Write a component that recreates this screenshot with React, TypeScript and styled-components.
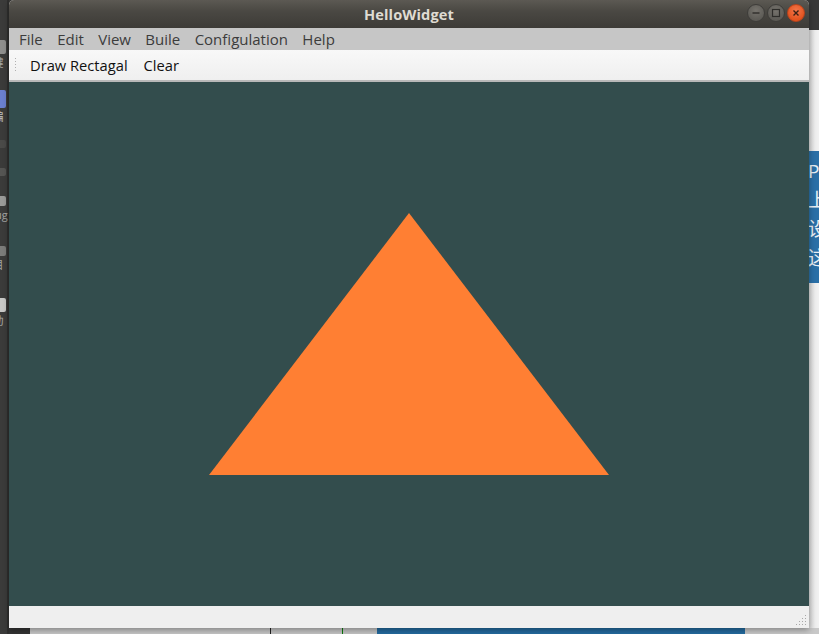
import React from "react";
import styled, { createGlobalStyle } from "styled-components";

const Global = createGlobalStyle`
  html, body { margin: 0; padding: 0; }
  body { width: 819px; height: 634px; overflow: hidden; background: #3a3a38; }
`;

const UI = `"Open Sans", "DejaVu Sans", "Noto Sans CJK SC", sans-serif`;

const Desktop = styled.div`
  position: relative;
  width: 819px;
  height: 634px;
  overflow: hidden;
  background: #3a3a38;
  font-family: ${UI};
`;

/* left launcher of the desktop, mostly hidden behind the window */
const Dock = styled.div`
  position: absolute;
  left: 0;
  top: 0;
  width: 9px;
  height: 634px;
  box-sizing: border-box;
  padding-top: 40px;
  display: flex;
  flex-direction: column;
  align-items: flex-end;
  gap: 2px;
  background: linear-gradient(to right, #3b3b3a 0 7px, #2f2f2e 7px);
  overflow: hidden;
`;

const DockItem = styled.div<{ $h: number }>`
  height: ${(p) => p.$h}px;
  width: 20px;
  flex: none;
  display: flex;
  flex-direction: column;
  align-items: center;
  gap: 3px;
  margin-right: 1px;
`;

const DockIcon = styled.div<{ $color: string; $h: number }>`
  width: 16px;
  height: ${(p) => p.$h}px;
  border-radius: 2px;
  background: ${(p) => p.$color};
`;

const DockLabel = styled.span<{ $color?: string }>`
  font-size: 11px;
  line-height: 12px;
  color: ${(p) => p.$color ?? "#a6a6a4"};
  white-space: nowrap;
`;

const RightBack = styled.div`
  position: absolute;
  left: 809px;
  top: 0;
  width: 10px;
  height: 634px;
  display: flex;
  flex-direction: column;
  background: linear-gradient(to right, #d6d6d6, #ececec 6px, #f2f2f2);
  overflow: hidden;
`;

const RightTop = styled.div`
  height: 30px;
  flex: none;
  margin-bottom: 121px;
  background: #383838;
`;

const BluePanel = styled.div`
  width: 10px;
  height: 132px;
  flex: none;
  background: #2a6fa6;
  color: #e8eef4;
  font-size: 19px;
  line-height: 29px;
  padding-top: 6px;
  box-sizing: border-box;
`;

const BlueLine = styled.div`
  margin-left: -1px;
  white-space: nowrap;
`;

const BottomBack = styled.div`
  position: absolute;
  left: 9px;
  top: 628px;
  width: 810px;
  height: 6px;
  display: flex;
  background: #c4c4c4;
`;

const BottomSeg = styled.div<{ $w: number; $bg: string; $edge?: string }>`
  width: ${(p) => p.$w}px;
  flex: none;
  background: ${(p) => p.$bg};
  border-left: ${(p) => (p.$edge ? `1px solid ${p.$edge}` : "none")};
  box-sizing: border-box;
`;

/* the application window */
const Window = styled.div`
  position: absolute;
  left: 9px;
  top: 0;
  width: 800px;
  height: 628px;
  display: flex;
  flex-direction: column;
  background: #efefef;
  border-radius: 5px 5px 0 0;
  overflow: hidden;
  box-shadow: 0 2px 6px rgba(0, 0, 0, 0.35);
`;

const TitleBar = styled.div`
  position: relative;
  height: 28px;
  flex: none;
  display: flex;
  align-items: center;
  justify-content: center;
  background: linear-gradient(to bottom, #5c5953 0, #4a4843 40%, #3d3b37 100%);
`;

const Title = styled.div`
  font-family: ${UI};
  font-weight: 700;
  font-size: 14.6px;
  color: #dfdbd2;
  letter-spacing: 0.1px;
`;

const Controls = styled.div`
  position: absolute;
  right: 4px;
  top: 4px;
  display: flex;
  gap: 2px;
`;

const CtlButton = styled.div<{ $close?: boolean }>`
  width: 18px;
  height: 18px;
  border-radius: 50%;
  display: flex;
  align-items: center;
  justify-content: center;
  box-sizing: border-box;
  border: 1px solid ${(p) => (p.$close ? "#b9431c" : "#3e3d3a")};
  background: ${(p) =>
    p.$close
      ? "radial-gradient(circle at 50% 35%, #f3764a, #e2531f 70%)"
      : "radial-gradient(circle at 50% 35%, #76736d, #5d5b56 70%)"};
`;

const MenuBar = styled.div`
  height: 22px;
  flex: none;
  display: flex;
  align-items: center;
  gap: 14.4px;
  padding-left: 10px;
  background: #c6c6c6;
`;

const MenuItem = styled.span`
  font-family: ${UI};
  font-size: 15px;
  color: #3c3c3c;
  line-height: 22px;
  margin-top: -1px;
`;

const ToolBar = styled.div`
  height: 30px;
  flex: none;
  display: flex;
  align-items: center;
  gap: 16px;
  padding-left: 5px;
  background: linear-gradient(to bottom, #f8f8f8, #efefef);
  border-bottom: 2px solid #b9b9b9;
`;

const Handle = styled.div`
  width: 3px;
  height: 16px;
  margin-right: -3px;
  background-image: radial-gradient(circle, #b0b0b0 0.7px, transparent 0.8px);
  background-size: 3px 3px;
`;

const ToolButton = styled.span`
  font-family: ${UI};
  font-size: 14.7px;
  color: #111;
`;

const GLView = styled.div`
  flex: none;
  height: 524px;
  background: #334d4d;
`;

const Canvas = styled.svg`
  display: block;
  width: 800px;
  height: 524px;
`;

const StatusBar = styled.div`
  flex: 1;
  display: flex;
  justify-content: flex-end;
  align-items: flex-end;
  padding: 0 2px 2px 0;
  background: #efefef;
`;

const menus = ["File", "Edit", "View", "Buile", "Configulation", "Help"];

const dock: { icon: string; ih: number; label?: string; lc?: string; h: number }[] = [
  { icon: "#8f8f8d", ih: 14, label: "鍵", h: 48 },
  { icon: "#6b7fd0", ih: 18, label: "编", lc: "#c0c0c0", h: 48 },
  { icon: "#4a4a48", ih: 8, h: 26 },
  { icon: "#555553", ih: 8, h: 26 },
  { icon: "#9a9a98", ih: 10, label: "bug", h: 48 },
  { icon: "#7c7c7a", ih: 10, label: "目", h: 50 },
  { icon: "#c8c8c6", ih: 14, label: "动", h: 48 },
];

const gripDots = [
  [10, 1],
  [7, 4],
  [10, 4],
  [4, 7],
  [7, 7],
  [10, 7],
  [1, 10],
  [4, 10],
  [7, 10],
  [10, 10],
];

export default function App() {
  const w = 800;
  const h = 524;
  const pt = (x: number, y: number) =>
    `${(w / 2) * (1 + x)},${(h / 2) * (1 - y)}`;
  return (
    <>
      <Global />
      <Desktop>
        <Dock>
          {dock.map((d, i) => (
            <DockItem key={i} $h={d.h}>
              <DockIcon $color={d.icon} $h={d.ih} />
              {d.label && <DockLabel $color={d.lc}>{d.label}</DockLabel>}
            </DockItem>
          ))}
        </Dock>

        <RightBack>
          <RightTop />
          <BluePanel>
            <BlueLine>Pi</BlueLine>
            <BlueLine>上</BlueLine>
            <BlueLine>设</BlueLine>
            <BlueLine>这</BlueLine>
          </BluePanel>
        </RightBack>

        <BottomBack>
          <BottomSeg $w={21} $bg="#333" />
          <BottomSeg $w={240} $bg="#c6c6c6" />
          <BottomSeg $w={72} $bg="#c4c4c4" $edge="#222" />
          <BottomSeg $w={35} $bg="#c4c4c4" $edge="#0a7a0a" />
          <BottomSeg $w={368} $bg="#236a9e" />
          <BottomSeg $w={74} $bg="#c8c8c8" />
        </BottomBack>

        <Window>
          <TitleBar>
            <Title>HelloWidget</Title>
            <Controls>
              <CtlButton>
                <svg width="10" height="10" viewBox="0 0 10 10">
                  <line x1="1.5" y1="5" x2="8.5" y2="5" stroke="#2e2d2a" strokeWidth="1.4" />
                </svg>
              </CtlButton>
              <CtlButton>
                <svg width="10" height="10" viewBox="0 0 10 10">
                  <rect x="1.5" y="1.5" width="7" height="7" fill="none" stroke="#2e2d2a" strokeWidth="1.2" />
                </svg>
              </CtlButton>
              <CtlButton $close>
                <svg width="10" height="10" viewBox="0 0 10 10">
                  <path d="M2.5 2.5 L7.5 7.5 M7.5 2.5 L2.5 7.5" stroke="#3b2014" strokeWidth="1.4" />
                </svg>
              </CtlButton>
            </Controls>
          </TitleBar>

          <MenuBar>
            {menus.map((m) => (
              <MenuItem key={m}>{m}</MenuItem>
            ))}
          </MenuBar>

          <ToolBar>
            <Handle />
            <ToolButton>Draw Rectagal</ToolButton>
            <ToolButton>Clear</ToolButton>
          </ToolBar>

          <GLView>
            <Canvas viewBox={`0 0 ${w} ${h}`}>
              <polygon
                points={`${pt(-0.5, -0.5)} ${pt(0.5, -0.5)} ${pt(0, 0.5)}`}
                fill="#ff7f33"
              />
            </Canvas>
          </GLView>

          <StatusBar>
            <svg width="12" height="12" viewBox="0 0 12 12">
              {gripDots.map(([x, y]) => (
                <rect key={`${x}-${y}`} x={x} y={y} width="1" height="1" fill="#a8a8a8" />
              ))}
            </svg>
          </StatusBar>
        </Window>
      </Desktop>
    </>
  );
}
